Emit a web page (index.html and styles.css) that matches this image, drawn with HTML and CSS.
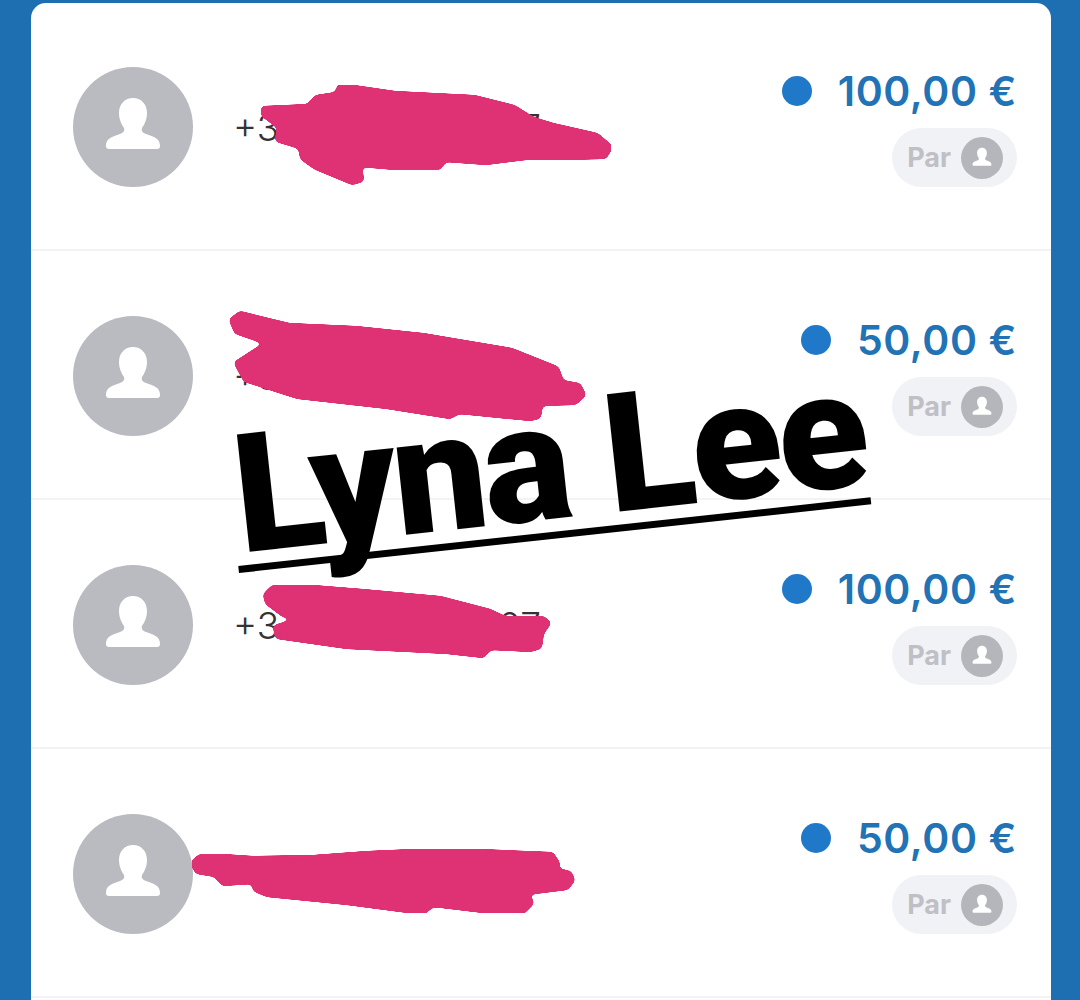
FILE: index.html

```html
<!DOCTYPE html>
<html lang="en">
<head>
  <meta charset="UTF-8" />
  <meta name="viewport" content="width=device-width, initial-scale=1.0"/>
  <title>Transferts</title>
  <link rel="stylesheet" href="styles.css">
</head>
<body>
  <svg class="defs" width="0" height="0">
    <symbol id="person" viewBox="0 0 120 120">
      <path d="M60 31c-8 0-14 6-14 15 0 7 3 12 5 15 1 3-1 5-4 6-8 3-14 4-14 12 0 2 1 3 3 3h48c2 0 3-1 3-3 0-8-6-9-14-12-3-1-5-3-4-6 2-3 5-8 5-15 0-9-6-15-14-15z"/>
    </symbol>
    <!-- rounds off the corners of the marker strokes -->
    <filter id="marker" x="0" y="0" width="100%" height="100%">
      <feGaussianBlur stdDeviation="2"/>
      <feColorMatrix values="1 0 0 0 0  0 1 0 0 0  0 0 1 0 0  0 0 0 14 -6"/>
    </filter>
  </svg>

  <main class="card">
    <div class="row">
      <div class="contact">
        <svg class="avatar"><use href="#person"/></svg>
        <div class="phone"><span>+3</span><span>7</span></div>
      </div>
      <div class="info">
        <div class="amount"><span class="dot"></span>100,00 €</div>
        <div class="by">Par <svg class="avatar-small"><use href="#person"/></svg></div>
      </div>
    </div>
    <div class="row">
      <div class="contact">
        <svg class="avatar"><use href="#person"/></svg>
        <div class="phone"><span>+3</span></div>
      </div>
      <div class="info">
        <div class="amount"><span class="dot"></span>50,00 €</div>
        <div class="by">Par <svg class="avatar-small"><use href="#person"/></svg></div>
      </div>
    </div>
    <div class="row">
      <div class="contact">
        <svg class="avatar"><use href="#person"/></svg>
        <div class="phone"><span>+3</span><span>07</span></div>
      </div>
      <div class="info">
        <div class="amount"><span class="dot"></span>100,00 €</div>
        <div class="by">Par <svg class="avatar-small"><use href="#person"/></svg></div>
      </div>
    </div>
    <div class="row">
      <div class="contact">
        <svg class="avatar"><use href="#person"/></svg>
        <div class="phone"><span>+3</span></div>
      </div>
      <div class="info">
        <div class="amount"><span class="dot"></span>50,00 €</div>
        <div class="by">Par <svg class="avatar-small"><use href="#person"/></svg></div>
      </div>
    </div>
  </main>

  <!-- hand drawn marks on top of the screenshot -->
  <svg class="scribbles" viewBox="0 0 1080 1000">
    <g filter="url(#marker)">
      <polygon points="263,108 308,106 316,97 336,94 340,85 395,93 474,97 514,107 533,119 553,125 597,135 611,147 605,157 565,158 526,158 486,163 445,160 439,168 395,168 360,165 362,180 352,183 316,168 302,158 300,147 277,140 279,127 263,115"/>
      <polygon points="231,320 240,313 289,325 356,328 423,335 512,350 557,368 562,382 579,385 584,395 575,403 541,404 539,417 530,419 459,412 450,417 387,407 298,397 276,390 245,380 236,363 267,343 236,332"/>
      <polygon points="265,595 273,587 313,587 363,591 440,598 490,611 505,618 543,618 549,623 542,633 540,647 530,650 490,648 483,656 447,652 347,647 277,637 275,627 300,619 283,615 267,603"/>
      <polygon points="192,863 200,856 223,856 253,858 313,857 367,853 413,851 480,851 552,854 558,863 557,870 570,873 573,880 567,888 527,893 532,903 523,912 500,913 433,905 423,913 347,903 267,895 255,890 253,882 223,884 215,875 197,872"/>
    </g>
  </svg>
  <div class="signature">Lyna Lee</div>
</body>
</html>
```

FILE: styles.css

```css
html, body {
  height: 1000px;
  overflow: hidden;
}
body {
  margin: 0;
  padding: 3px 29px 0 31px;
  box-sizing: border-box;
  position: relative;
  font-family: Inter, Lato, sans-serif;
  background: #1e6eb2;
}
.defs {
  position: absolute;
}
.card {
  background: #fff;
  border-radius: 15px 15px 0 0;
  height: 997px;
  overflow: hidden;
}
.row {
  display: flex;
  justify-content: space-between;
  box-sizing: border-box;
  height: 249px;
  padding: 65px 34px 0 42px;
  border-bottom: 2px solid #f2f3f5;
}
.row:first-child {
  height: 248px;
  padding-top: 64px;
}
.contact {
  display: flex;
  align-items: center;
  gap: 40px;
  height: 120px;
}
.avatar {
  width: 120px;
  height: 120px;
  border-radius: 50%;
  background: #b9bbc0;
  fill: #fff;
}
.phone {
  display: flex;
  justify-content: space-between;
  width: 308px;
  font-size: 37px;
  font-weight: 300;
  color: #333;
}
.info {
  display: flex;
  flex-direction: column;
  align-items: flex-end;
}
.amount {
  display: flex;
  align-items: center;
  height: 48px;
  font-size: 41px;
  font-weight: 600;
  letter-spacing: 0.6px;
  color: #2273b5;
}
.dot {
  width: 30px;
  height: 30px;
  border-radius: 50%;
  background: #2078c8;
  margin-right: 26px;
}
.by {
  display: flex;
  align-items: center;
  gap: 10px;
  height: 59px;
  margin-top: 13px;
  padding: 0 14px 0 15px;
  border-radius: 30px;
  background: #f1f2f6;
  color: #bfc0c5;
  font-size: 27px;
  font-weight: 700;
}
.avatar-small {
  width: 42px;
  height: 42px;
  border-radius: 50%;
  background: #b5b6bb;
  fill: #fff;
}
.scribbles {
  position: absolute;
  left: 0;
  top: 0;
  width: 1080px;
  height: 1000px;
  fill: #df3175;
  stroke: #df3175;
  stroke-width: 4;
  stroke-linejoin: round;
}
.signature {
  position: absolute;
  left: 239px;
  top: 427px;
  width: 636px;
  padding-left: 4px;
  box-sizing: border-box;
  font-family: Roboto, "Liberation Sans", sans-serif;
  font-size: 166px;
  font-weight: 900;
  line-height: 139px;
  letter-spacing: -3.4px;
  white-space: nowrap;
  color: #000;
  border-bottom: 7px solid #000;
  transform: rotate(-6.2deg);
  transform-origin: left bottom;
}
```
